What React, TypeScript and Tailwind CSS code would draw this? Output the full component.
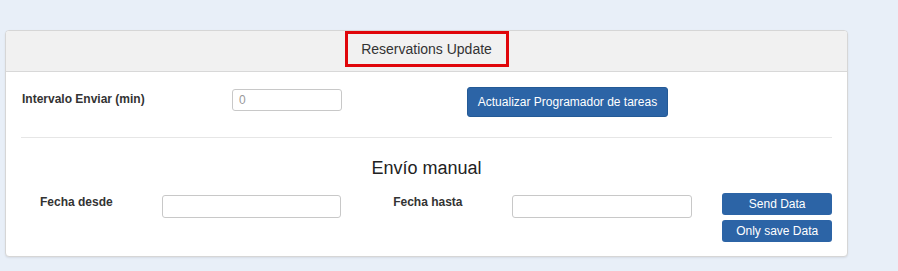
import React from "react";

export default function App() {
  const font = { fontFamily: '"Liberation Sans", Arial, Helvetica, sans-serif' };
  return (
    <div className="w-[898px] h-[271px] bg-[#e8eff8] pt-[30px] pl-[5px]" style={font}>
      <div className="w-[843px] h-[227px] bg-white border border-[#d6d6d6] rounded-[4px] shadow-[0_1px_2px_rgba(0,0,0,0.08)] flex flex-col overflow-hidden">
        <div className="h-[41px] bg-[#f1f1f1] border-b border-[#d8d8d8] flex items-start justify-center">
          <div className="h-[36px] w-[164px] border-[3px] border-[#e0060a] flex items-center justify-center text-[14px] text-[#333]">
            Reservations Update
          </div>
        </div>
        <div className="px-[15px] pt-[15px] flex flex-col">
          <div className="flex items-start h-[30px]">
            <div className="w-[211px] pl-[1px] pt-[5px] text-[12px] leading-[14px] font-bold text-[#333]">
              Intervalo Enviar (min)
            </div>
            <div className="mt-[2px] w-[110px] h-[22px] border border-[#c8c8c8] rounded-[3px] flex items-center pl-[6px] text-[12px] text-[#999]">
              0
            </div>
            <div className="ml-[125px] w-[201px] h-[30px] bg-[#2c64a6] border border-[#245a96] rounded-[3px] flex items-center justify-center text-[12px] text-white">
              Actualizar Programador de tareas
            </div>
          </div>
          <div className="mt-[20px] border-t border-[#e6e6e6]" />
          <div className="mt-[20px] h-[20px] flex items-center justify-center text-[18px] leading-[20px] text-[#222]">
            Envío manual
          </div>
          <div className="mt-[15px] flex items-start">
            <div className="w-[141px] pl-[19px] pt-[2px] text-[12px] leading-[14px] font-bold text-[#333]">
              Fecha desde
            </div>
            <div className="mt-[2px] w-[180px] h-[23px] border border-[#c8c8c8] rounded-[3px]" />
            <div className="w-[171px] pl-[52px] pt-[2px] text-[12px] leading-[14px] font-bold text-[#333]">
              Fecha hasta
            </div>
            <div className="mt-[2px] w-[181px] h-[23px] border border-[#c8c8c8] rounded-[3px]" />
            <div className="ml-[30px] w-[110px] flex flex-col gap-[5px]">
              <div className="h-[22px] bg-[#2c64a6] rounded-[3px] flex items-center justify-center text-[12px] text-white">
                Send Data
              </div>
              <div className="h-[22px] bg-[#2c64a6] rounded-[3px] flex items-center justify-center text-[12px] text-white">
                Only save Data
              </div>
            </div>
          </div>
        </div>
      </div>
    </div>
  );
}
